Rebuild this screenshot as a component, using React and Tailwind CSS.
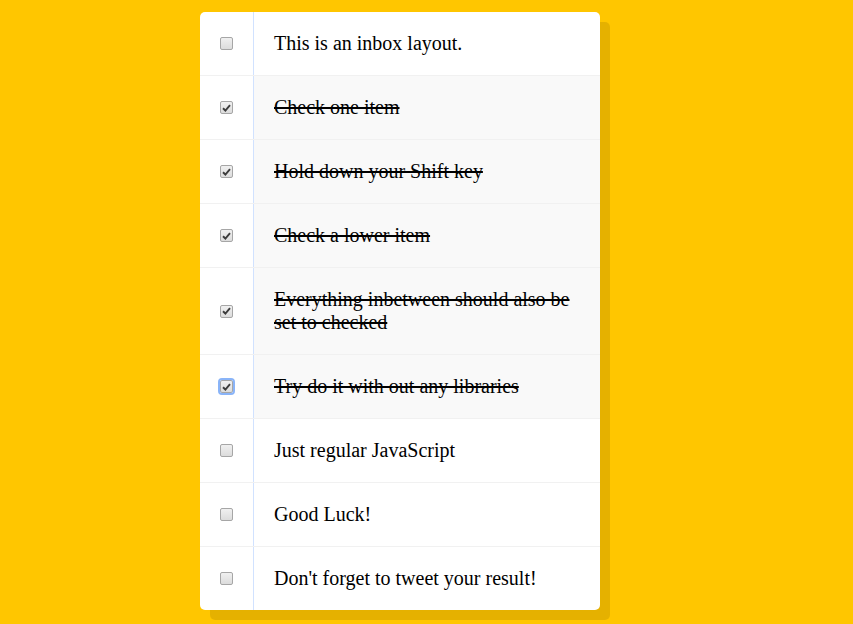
import React from 'react';

const items = [
  { text: 'This is an inbox layout.', checked: false },
  { text: 'Check one item', checked: true },
  { text: 'Hold down your Shift key', checked: true },
  { text: 'Check a lower item', checked: true },
  { text: 'Everything inbetween should also be set to checked', checked: true },
  { text: 'Try do it with out any libraries', checked: true, focused: true },
  { text: 'Just regular JavaScript', checked: false },
  { text: 'Good Luck!', checked: false },
  { text: "Don't forget to tweet your result!", checked: false },
];

const Box = ({ checked, focused }) => (
  <div
    className={`w-[13px] h-[13px] rounded-[2px] border border-[#a6a6a6] bg-gradient-to-b from-[#f0f0f0] to-[#dcdcdc] flex items-center justify-center ${
      focused ? 'outline-2 outline-[#8ab4f8]' : ''
    }`}
  >
    {checked && (
      <svg width="9" height="8" viewBox="0 0 9 8">
        <path d="M1 4.2 L3.4 6.5 L8 1.2" fill="none" stroke="#3c3c3c" strokeWidth="1.9" />
      </svg>
    )}
  </div>
);

export default function App() {
  return (
    <div className="min-h-screen bg-[#ffc600] pt-3 font-['Liberation_Serif',serif]">
      <div className="w-[400px] ml-[200px] bg-white rounded-[5px] shadow-[10px_10px_0_rgba(0,0,0,0.1)] overflow-hidden">
        {items.map((item, i) => (
          <div
            key={i}
            className={`flex items-stretch ${i < items.length - 1 ? 'border-b border-[#f1f1f1]' : ''}`}
          >
            <div className="w-[53px] shrink-0 flex items-center justify-center">
              <Box checked={item.checked} focused={item.focused} />
            </div>
            <p
              className={`flex-1 m-0 p-5 border-l border-[#d1e2ff] text-[20px] leading-[23px] text-black ${
                item.checked ? 'bg-[#f9f9f9] line-through' : ''
              }`}
            >
              {item.text}
            </p>
          </div>
        ))}
      </div>
    </div>
  );
}
